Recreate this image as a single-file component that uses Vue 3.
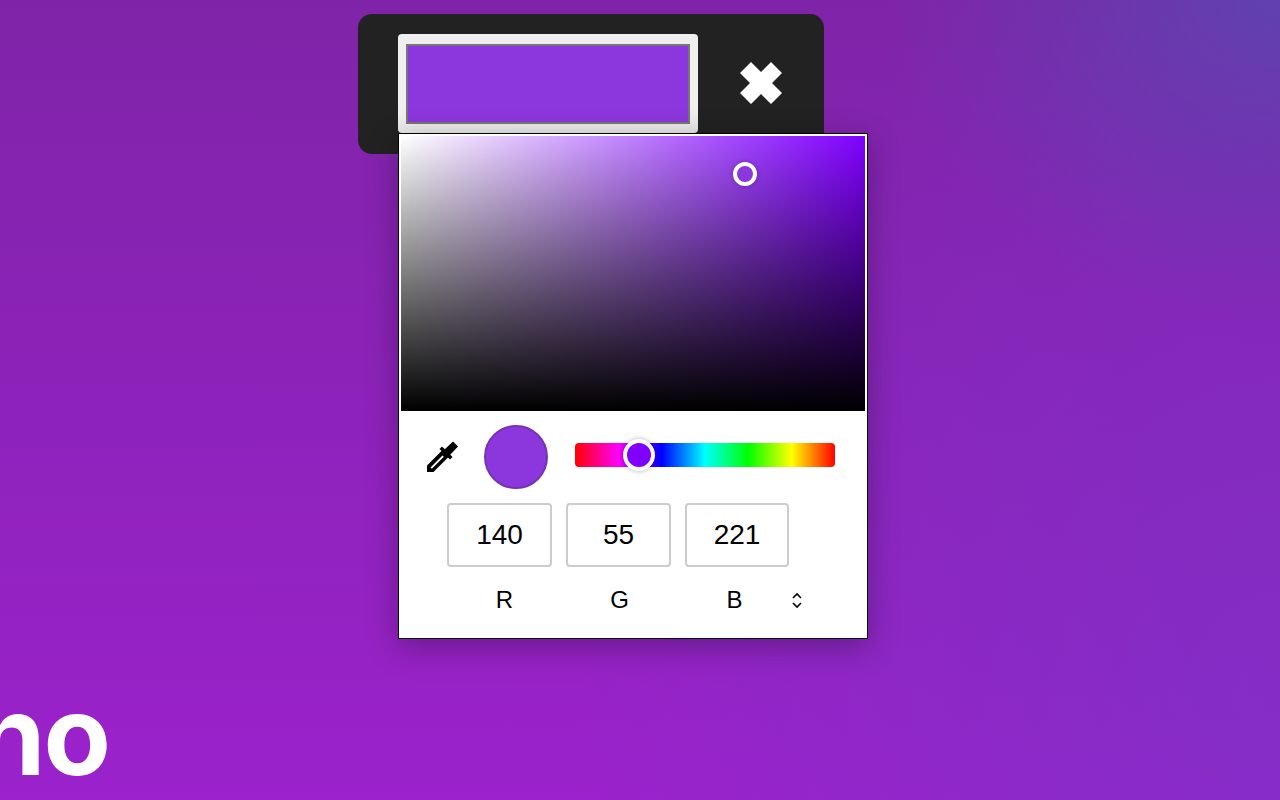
<script setup>
const values = [
  { label: 'R', value: 140 },
  { label: 'G', value: 55 },
  { label: 'B', value: 221 },
]
</script>

<template>
  <main class="page">
    <div class="logo">no</div>
    <section class="bar">
      <div class="swatch"><div class="swatch-fill"></div></div>
      <button class="close" aria-label="Close">
        <svg width="44" height="44" viewBox="0 0 44 44">
          <path d="M1 12 L12 1 L22 11 L32 1 L43 12 L33 22 L43 32 L32 43 L22 33 L12 43 L1 32 L11 22 Z" fill="#fff" />
        </svg>
      </button>
      <div class="picker">
        <div class="sat">
          <span class="sat-thumb"></span>
        </div>
        <div class="controls">
          <svg class="dropper" width="34" height="34" viewBox="0 0 34 34">
            <path d="M2 32 L2 25.5 L17 10.5 L23.5 17 L8.5 32 Z" fill="#000" />
            <path d="M5.5 27.5 L17.5 15.5 L18.8 16.8 L6.8 28.8 Z" fill="#fff" />
            <path d="M17 6.5 L27.5 17 L25 19.5 L14.5 9 Z" fill="#000" />
            <path d="M19 10 L28 1.5 L33 6.5 L24.5 15.5 Z" fill="#000" />
          </svg>
          <div class="preview"></div>
          <div class="hue"><span class="hue-thumb"></span></div>
        </div>
        <div class="inputs">
          <div v-for="item in values" :key="item.label" class="field">{{ item.value }}</div>
        </div>
        <div class="labels">
          <span v-for="item in values" :key="item.label" class="label">{{ item.label }}</span>
          <svg class="chev" width="12" height="17" viewBox="0 0 12 17">
            <path d="M2 6 L6 2 L10 6 M2 11 L6 15 L10 11" stroke="#000" stroke-width="1.6" fill="none" />
          </svg>
        </div>
      </div>
    </section>
  </main>
</template>

<style>
html, body { margin: 0; overflow: hidden; }
</style>

<style scoped>
.page {
  position: relative;
  width: 1280px;
  height: 800px;
  box-sizing: border-box;
  padding: 14px 0 0 358px;
  overflow: hidden;
  font-family: "Liberation Sans", Arial, sans-serif;
  background:
    radial-gradient(ellipse 400px 320px at 1280px 0, rgba(88, 72, 176, .8), rgba(88, 72, 176, 0)),
    radial-gradient(ellipse 700px 800px at 1280px 700px, rgba(112, 56, 196, .5), rgba(112, 56, 196, 0)),
    linear-gradient(180deg, #7f24a8 0%, #8a23b6 40%, #9b22cc 100%);
}
.logo {
  position: absolute;
  left: -23px;
  top: 668px;
  font-family: Inter, sans-serif;
  font-weight: 700;
  font-size: 110px;
  line-height: 134px;
  letter-spacing: -2px;
  color: #fff;
}
.bar {
  position: relative;
  display: flex;
  align-items: flex-start;
  width: 466px;
  height: 140px;
  box-sizing: border-box;
  padding: 20px 0 0 40px;
  border-radius: 14px;
  background: #222;
}
.swatch {
  width: 300px;
  height: 99px;
  box-sizing: border-box;
  padding: 10px 8px 9px;
  border-radius: 4px;
  background: linear-gradient(180deg, #efefef 80%, #e8e8e8 100%);
}
.swatch-fill {
  height: 80px;
  box-sizing: border-box;
  border: 2px solid #767676;
  background: #8c37dd;
}
.close {
  display: flex;
  width: 44px;
  height: 44px;
  margin: 27px 0 0 41px;
  padding: 0;
  border: 0;
  background: none;
}
.picker {
  position: absolute;
  left: 40px;
  top: 119px;
  width: 470px;
  height: 506px;
  box-sizing: border-box;
  padding: 2px 2px 0 2px;
  border: 1px solid #000;
  background: #fff;
  box-shadow: 0 8px 30px rgba(0, 0, 0, .3);
}
.sat {
  position: relative;
  height: 275px;
  background:
    linear-gradient(180deg, rgba(0, 0, 0, 0), #000),
    linear-gradient(90deg, #fff, rgba(255, 255, 255, 0)),
    #8000ff;
}
.sat-thumb {
  position: absolute;
  left: 332px;
  top: 26px;
  width: 24px;
  height: 24px;
  box-sizing: border-box;
  border: 4px solid #fff;
  border-radius: 50%;
  background: #8c37dd;
  box-shadow: 0 0 4px rgba(0, 0, 0, .25);
}
.controls {
  display: flex;
  align-items: center;
  height: 64px;
  margin-top: 14px;
  padding-left: 24px;
}
.dropper { flex: none; }
.preview {
  flex: none;
  width: 64px;
  height: 64px;
  box-sizing: border-box;
  margin-left: 25px;
  border: 2px solid #7533b4;
  border-radius: 50%;
  background: #8c37dd;
}
.hue {
  position: relative;
  flex: none;
  width: 260px;
  height: 24px;
  margin: -4px 0 0 27px;
  border-radius: 4px;
  background: linear-gradient(90deg, #f00 0%, #f0f 16.67%, #00f 33.33%, #0ff 50%, #0f0 66.67%, #ff0 83.33%, #f00 100%);
}
.hue-thumb {
  position: absolute;
  left: 48px;
  top: -4px;
  width: 32px;
  height: 32px;
  box-sizing: border-box;
  border: 4px solid #fff;
  border-radius: 50%;
  background: #8000ff;
  box-shadow: 0 0 5px rgba(0, 0, 0, .3);
}
.inputs {
  display: flex;
  gap: 14px;
  margin-top: 14px;
  padding-left: 46px;
}
.field {
  width: 105px;
  height: 64px;
  box-sizing: border-box;
  border: 2px solid #ccc;
  border-radius: 4px;
  color: #000;
  font-size: 28px;
  line-height: 59px;
  text-align: center;
}
.field:last-child { width: 104px; }
.labels {
  display: flex;
  align-items: center;
  height: 28px;
  margin-top: 19px;
  padding-left: 46px;
}
.label {
  width: 115px;
  color: #000;
  font-size: 24px;
  line-height: 28px;
  text-align: center;
}
.chev { margin: 0 0 0 -1px; }
</style>
